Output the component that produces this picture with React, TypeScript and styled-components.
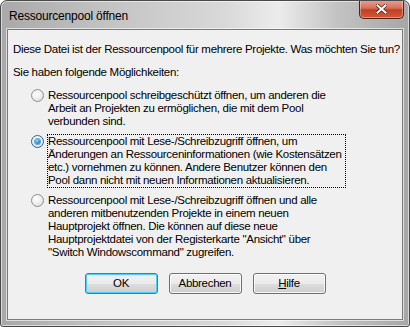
import React, { useState } from 'react';
import styled, { createGlobalStyle } from 'styled-components';

const GlobalStyle = createGlobalStyle`
  html, body {
    margin: 0;
    padding: 0;
    background: #ffffff;
  }
  body {
    font-family: "Liberation Sans", Arial, sans-serif;
  }
`;

const Window = styled.div`
  width: 410px;
  height: 327px;
  box-sizing: border-box;
  display: flex;
  flex-direction: column;
  border: 1px solid #4a4a4a;
  border-radius: 7px 7px 3px 3px;
  background: linear-gradient(
    to right,
    #a9a9a9 0%,
    #c2c2c2 25%,
    #d9d9d9 55%,
    #ececec 68%,
    #c4c4c4 82%,
    #a6a6a6 100%
  );
  box-shadow: inset 0 0 0 1px rgba(255, 255, 255, 0.55);
  overflow: hidden;
`;

const TitleBar = styled.div`
  height: 28px;
  display: flex;
  align-items: flex-start;
  justify-content: space-between;
  padding: 0 5px 0 8px;
  flex-shrink: 0;
`;

const Title = styled.span`
  font-size: 12px;
  color: #000;
  line-height: 30px;
  letter-spacing: -0.2px;
`;

const CloseButton = styled.div`
  width: 45px;
  height: 19px;
  margin-top: -1px;
  box-sizing: border-box;
  border: 1px solid #5b1d14;
  border-top: none;
  border-radius: 0 0 5px 5px;
  background: linear-gradient(to bottom, #e8a393 0%, #d6705a 45%, #c23f20 55%, #cf5a3b 100%);
  box-shadow: inset 0 0 0 1px rgba(255, 255, 255, 0.35);
  display: flex;
  align-items: center;
  justify-content: center;
`;

const Client = styled.div`
  flex: 1;
  margin: 0 6px 6px 6px;
  box-sizing: border-box;
  background: #f0f0f0;
  border: 1px solid #7a7a7a;
  box-shadow: 0 0 0 1px rgba(255, 255, 255, 0.6);
  display: flex;
  flex-direction: column;
  padding: 13px 0 0 5px;
  color: #000;
  font-size: 11.5px;
  line-height: 13px;
  letter-spacing: -0.3px;
`;

const Paragraph = styled.div<{ $gap: number }>`
  white-space: nowrap;
  margin-bottom: ${(p) => p.$gap}px;
`;

const OptionList = styled.div`
  display: flex;
  flex-direction: column;
  gap: 7px;
  padding-left: 18px;
`;

const OptionRow = styled.label`
  display: flex;
  align-items: flex-start;
  gap: 4px;
`;

const Radio = styled.span<{ $checked: boolean }>`
  width: 13px;
  height: 13px;
  box-sizing: border-box;
  border-radius: 50%;
  border: 1px solid ${(p) => (p.$checked ? '#2c628b' : '#8e8f8f')};
  background: radial-gradient(circle at 40% 35%, #ffffff 0%, #f0f0f0 45%, #d4d4d4 100%);
  display: flex;
  align-items: center;
  justify-content: center;
  flex-shrink: 0;

  &::after {
    content: '';
    display: ${(p) => (p.$checked ? 'block' : 'none')};
    width: 5px;
    height: 5px;
    border-radius: 50%;
    background: radial-gradient(circle at 40% 35%, #a9dcf5 0%, #2a8fd0 55%, #10578f 100%);
    box-shadow: 0 0 0 1px #5fa6d3;
  }
`;

const OptionText = styled.span<{ $focused: boolean }>`
  white-space: nowrap;
  outline: ${(p) => (p.$focused ? '1px dotted #000' : 'none')};
  padding-right: ${(p) => (p.$focused ? '3px' : '0')};
`;

const ButtonRow = styled.div`
  display: flex;
  justify-content: center;
  gap: 11px;
  margin-top: 14px;
  margin-left: -5px;
`;

const Button = styled.div<{ $default?: boolean }>`
  width: 73px;
  height: 21px;
  box-sizing: border-box;
  border: 1px solid ${(p) => (p.$default ? '#3c7fb1' : '#707070')};
  border-radius: 3px;
  background: linear-gradient(to bottom, #f2f2f2 0%, #ebebeb 50%, #dddddd 51%, #cfcfcf 100%);
  box-shadow: inset 0 0 0 1px ${(p) => (p.$default ? '#48d0fb' : 'rgba(255,255,255,0.8)')};
  display: flex;
  align-items: center;
  justify-content: center;
  font-size: 11.5px;
`;

const options = [
  'Ressourcenpool schreibgeschützt öffnen, um anderen die\nArbeit an Projekten zu ermöglichen, die mit dem Pool\nverbunden sind.',
  'Ressourcenpool mit Lese-/Schreibzugriff öffnen, um\nÄnderungen an Ressourceninformationen (wie Kostensätzen\netc.) vornehmen zu können. Andere Benutzer können den\nPool dann nicht mit neuen Informationen aktualisieren.',
  'Ressourcenpool mit Lese-/Schreibzugriff öffnen und alle\nanderen mitbenutzenden Projekte in einem neuen\nHauptprojekt öffnen. Die können auf diese neue\nHauptprojektdatei von der Registerkarte "Ansicht" über\n"Switch Windowscommand" zugreifen.',
];

const App = () => {
  const [selected, setSelected] = useState(1);

  return (
    <>
      <GlobalStyle />
      <Window>
        <TitleBar>
          <Title>Ressourcenpool öffnen</Title>
          <CloseButton>
            <svg width="11" height="10" viewBox="0 0 11 10">
              <path d="M1.5 1.5 L9.5 8.5 M9.5 1.5 L1.5 8.5" stroke="#5a1a10" strokeWidth="3.4" strokeLinecap="square" />
              <path d="M1.5 1.5 L9.5 8.5 M9.5 1.5 L1.5 8.5" stroke="#ffffff" strokeWidth="2" strokeLinecap="square" />
            </svg>
          </CloseButton>
        </TitleBar>
        <Client>
          <Paragraph $gap={10}>
            Diese Datei ist der Ressourcenpool für mehrere Projekte. Was möchten Sie tun?
          </Paragraph>
          <Paragraph $gap={10}>Sie haben folgende Möglichkeiten:</Paragraph>
          <OptionList>
            {options.map((text, i) => (
              <OptionRow key={i} onClick={() => setSelected(i)}>
                <Radio $checked={selected === i} />
                <OptionText $focused={selected === i}>
                  {text.split('\n').map((line, j) => (
                    <div key={j}>{line}</div>
                  ))}
                </OptionText>
              </OptionRow>
            ))}
          </OptionList>
          <ButtonRow>
            <Button $default>OK</Button>
            <Button>Abbrechen</Button>
            <Button>
              <span>
                <u>H</u>ilfe
              </span>
            </Button>
          </ButtonRow>
        </Client>
      </Window>
    </>
  );
};

export default App;
